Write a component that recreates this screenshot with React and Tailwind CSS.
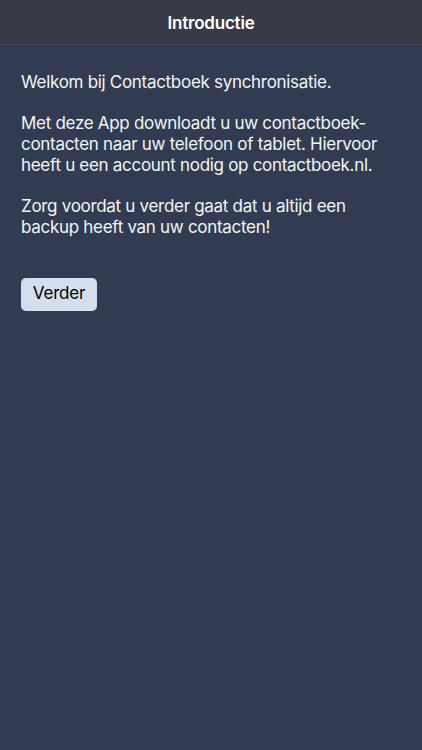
import React from 'react';

const App = () => {
    const font = { fontFamily: 'Inter, "Liberation Sans", sans-serif' };

    return (
        <div className="min-h-[750px] bg-[#313b51] text-white" style={font}>
            {/* Navigation bar */}
            <div className="h-[45px] pt-[3px] bg-[#363a46] border-b border-[#434a5c] flex items-center justify-center">
                <h1 className="text-[17px] font-semibold tracking-[-0.2px]">Introductie</h1>
            </div>

            {/* Intro text */}
            <div className="px-[21px] pt-[27px]">
                <div className="text-[17px] leading-[20.7px] tracking-[-0.3px] text-[#f4f5f7]">
                    <p>Welkom bij Contactboek synchronisatie.</p>
                    <p className="mt-[20.7px]">
                        Met deze App downloadt u uw contactboek-<br />
                        contacten naar uw telefoon of tablet. Hiervoor<br />
                        heeft u een account nodig op contactboek.nl.
                    </p>
                    <p className="mt-[20.7px]">
                        Zorg voordat u verder gaat dat u altijd een<br />
                        backup heeft van uw contacten!
                    </p>
                </div>

                <button className="mt-[40px] h-[33px] w-[76px] rounded-[5px] bg-[#d3dfec] text-black text-[17px] tracking-[-0.2px] flex items-center justify-center">
                    Verder
                </button>
            </div>
        </div>
    );
};

export default App;
